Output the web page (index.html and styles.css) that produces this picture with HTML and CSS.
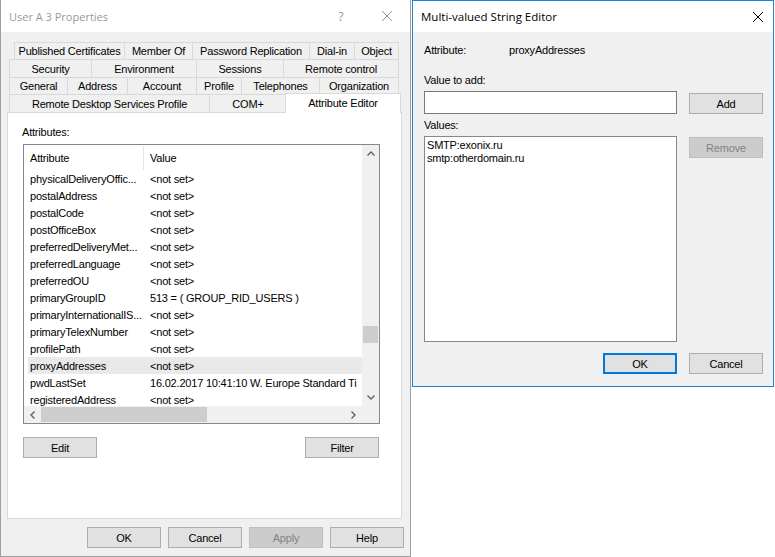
FILE: index.html
```html
<!DOCTYPE html>
<html lang="en">

<head>
    <meta charset="UTF-8">
    <title>User A 3 Properties</title>
    <link rel="stylesheet" href="styles.css">
</head>

<body>
    <div class="desktop">

        <!-- properties window (inactive, behind) -->
        <div class="window props">
            <div class="titlebar">
                <span class="title">User A 3 Properties</span>
                <span class="caption help">?</span>
                <span class="caption close">
                    <svg width="10" height="10" viewBox="0 0 10 10"><path d="M0 0L10 10M10 0L0 10" stroke="#999" stroke-width="1"/></svg>
                </span>
            </div>
            <div class="props-body">
                <div class="tabs">
                    <div class="tab-row row1">
                        <div class="tab">Published Certificates</div>
                        <div class="tab">Member Of</div>
                        <div class="tab">Password Replication</div>
                        <div class="tab">Dial-in</div>
                        <div class="tab">Object</div>
                    </div>
                    <div class="tab-row row2">
                        <div class="tab">Security</div>
                        <div class="tab">Environment</div>
                        <div class="tab">Sessions</div>
                        <div class="tab">Remote control</div>
                    </div>
                    <div class="tab-row row3">
                        <div class="tab">General</div>
                        <div class="tab">Address</div>
                        <div class="tab">Account</div>
                        <div class="tab">Profile</div>
                        <div class="tab">Telephones</div>
                        <div class="tab">Organization</div>
                    </div>
                    <div class="tab-row row4">
                        <div class="tab">Remote Desktop Services Profile</div>
                        <div class="tab">COM+</div>
                        <div class="tab active">Attribute Editor</div>
                    </div>
                </div>

                <div class="panel">
                    <div class="label">Attributes:</div>
                    <div class="listview">
                        <div class="lv-main">
                            <div class="lv-header">
                                <div class="hcol hcol-attr">Attribute</div>
                                <div class="hcol">Value</div>
                            </div>
                            <div class="lv-row"><span>physicalDeliveryOffic...</span><span>&lt;not set&gt;</span></div>
                            <div class="lv-row"><span>postalAddress</span><span>&lt;not set&gt;</span></div>
                            <div class="lv-row"><span>postalCode</span><span>&lt;not set&gt;</span></div>
                            <div class="lv-row"><span>postOfficeBox</span><span>&lt;not set&gt;</span></div>
                            <div class="lv-row"><span>preferredDeliveryMet...</span><span>&lt;not set&gt;</span></div>
                            <div class="lv-row"><span>preferredLanguage</span><span>&lt;not set&gt;</span></div>
                            <div class="lv-row"><span>preferredOU</span><span>&lt;not set&gt;</span></div>
                            <div class="lv-row"><span>primaryGroupID</span><span>513 = ( GROUP_RID_USERS )</span></div>
                            <div class="lv-row"><span>primaryInternationalIS...</span><span>&lt;not set&gt;</span></div>
                            <div class="lv-row"><span>primaryTelexNumber</span><span>&lt;not set&gt;</span></div>
                            <div class="lv-row"><span>profilePath</span><span>&lt;not set&gt;</span></div>
                            <div class="lv-row selected"><span>proxyAddresses</span><span>&lt;not set&gt;</span></div>
                            <div class="lv-row"><span>pwdLastSet</span><span>16.02.2017 10:41:10 W. Europe Standard Ti</span></div>
                            <div class="lv-row"><span>registeredAddress</span><span>&lt;not set&gt;</span></div>
                        </div>
                        <div class="vscroll">
                            <div class="sb-btn">
                                <svg width="8" height="5" viewBox="0 0 8 5"><path d="M0.5 4.5L4 1L7.5 4.5" fill="none" stroke="#606060" stroke-width="1.4"/></svg>
                            </div>
                            <div class="vtrack"><div class="vthumb"></div></div>
                            <div class="sb-btn">
                                <svg width="8" height="5" viewBox="0 0 8 5"><path d="M0.5 0.5L4 4L7.5 0.5" fill="none" stroke="#606060" stroke-width="1.4"/></svg>
                            </div>
                        </div>
                        <div class="hscroll">
                            <div class="sb-btn">
                                <svg width="5" height="8" viewBox="0 0 5 8"><path d="M4.5 0.5L1 4L4.5 7.5" fill="none" stroke="#606060" stroke-width="1.4"/></svg>
                            </div>
                            <div class="htrack"><div class="hthumb"></div></div>
                            <div class="sb-btn">
                                <svg width="5" height="8" viewBox="0 0 5 8"><path d="M0.5 0.5L4 4L0.5 7.5" fill="none" stroke="#606060" stroke-width="1.4"/></svg>
                            </div>
                        </div>
                        <div class="sb-corner"></div>
                    </div>
                    <div class="panel-buttons">
                        <button class="btn">Edit</button>
                        <button class="btn">Filter</button>
                    </div>
                </div>

                <div class="dialog-buttons">
                    <button class="btn">OK</button>
                    <button class="btn">Cancel</button>
                    <button class="btn" disabled>Apply</button>
                    <button class="btn">Help</button>
                </div>
            </div>
        </div>

        <!-- multi-valued string editor (active) -->
        <div class="window editor">
            <div class="titlebar">
                <span class="title">Multi-valued String Editor</span>
                <span class="caption close small">
                    <svg width="10" height="10" viewBox="0 0 10 10"><path d="M0 0L10 10M10 0L0 10" stroke="#000" stroke-width="1"/></svg>
                </span>
            </div>
            <div class="ed-body">
                <div class="attr-line">
                    <span>Attribute:</span>
                    <span>proxyAddresses</span>
                </div>
                <div class="label value-label">Value to add:</div>
                <div class="input-line">
                    <div class="textbox"></div>
                    <button class="btn">Add</button>
                </div>
                <div class="label values-label">Values:</div>
                <div class="values-line">
                    <div class="valuebox">
                        <div>SMTP:exonix.ru</div>
                        <div>smtp:otherdomain.ru</div>
                    </div>
                    <button class="btn remove" disabled>Remove</button>
                </div>
                <div class="ed-buttons">
                    <button class="btn default">OK</button>
                    <button class="btn">Cancel</button>
                </div>
            </div>
        </div>

    </div>
</body>

</html>
```

FILE: styles.css
```css
* {
    box-sizing: border-box;
}

body {
    margin: 0;
    background: #fff;
    font-family: "Liberation Sans", Arial, sans-serif;
    font-size: 11px;
    letter-spacing: -0.2px;
    color: #000;
}

.desktop {
    position: relative;
    width: 775px;
    height: 557px;
    overflow: hidden;
}

/* windows sit on the desktop at their own spots */
.window {
    position: absolute;
    top: 0;
    display: flex;
    flex-direction: column;
    background: #f0f0f0;
}

.props {
    left: 0;
    width: 411px;
    height: 557px;
    border: 1px solid #a0a0a0;
    border-top: none;
}

.editor {
    left: 412px;
    width: 362px;
    height: 387px;
    border: 1px solid #1883d7;
}

.titlebar {
    height: 32px;
    flex: none;
    display: flex;
    align-items: center;
    background: #fff;
    padding-left: 8px;
    font-family: "Open Sans", sans-serif;
    font-size: 11px;
    letter-spacing: 0;
}

.editor .titlebar {
    height: 31px;
    font-size: 11.5px;
}

.props .title {
    color: #999;
    padding-top: 1px;
}

.title {
    flex: 1;
}

.caption {
    width: 46px;
    height: 100%;
    display: flex;
    align-items: center;
    justify-content: center;
}

.caption.help {
    color: #999;
    font-size: 12.5px;
}

.caption.small {
    width: 30px;
    padding-top: 1px;
}

/* ---- tabs ---- */
.props-body {
    padding: 10px 0 0 6px;
}

.tabs {
    margin-left: 2px;
    width: 390px;
}

.tab-row {
    display: grid;
}

.row1 {
    grid-template-columns: 111px 68px 117px 45px 44px;
    margin-left: 5px;
    height: 17px;
}

.row2 {
    grid-template-columns: 83px 105px 87px 115px;
    height: 18px;
}

.row3 {
    grid-template-columns: 59px 60px 69px 45px 78px 79px;
    height: 17px;
}

.row4 {
    grid-template-columns: 201px 77px 112px;
    height: 18px;
}

.tab {
    display: flex;
    align-items: center;
    justify-content: center;
    white-space: nowrap;
    border-top: 1px solid #d9d9d9;
    border-right: 1px solid #d9d9d9;
    background: #f0f0f0;
}

.tab:first-child {
    border-left: 1px solid #d9d9d9;
}

.tab.active {
    position: relative;
    margin: -1px -2px -1px -2px;
    border-left: 1px solid #d9d9d9;
    background: #fff;
    padding-bottom: 2px;
}

.panel {
    width: 395px;
    height: 407px;
    background: #fff;
    border: 1px solid #d9d9d9;
    padding: 13px 0 0 14px;
}

.label {
    line-height: 13px;
}

/* ---- attribute list ---- */
.listview {
    margin: 5px 0 0 1px;
    width: 357px;
    height: 280px;
    border: 1px solid #828790;
    display: grid;
    grid-template-columns: 1fr 17px;
    grid-template-rows: 1fr 17px;
}

.lv-main {
    overflow: hidden;
    background: #fff;
}

.lv-header {
    display: flex;
    height: 25px;
}

.hcol {
    display: flex;
    align-items: center;
    padding-left: 6px;
}

.hcol-attr {
    width: 120px;
    border-right: 1px solid #e5e5e5;
    margin-top: 1px;
}

.lv-row {
    display: grid;
    grid-template-columns: 114px 1fr;
    height: 17px;
    line-height: 18px;
    margin-left: 4px;
    padding-left: 2px;
    white-space: nowrap;
    overflow: hidden;
}

.lv-row span:last-child {
    padding-left: 6px;
}

.lv-row.selected {
    background: #e9e9e9;
}

.vscroll,
.hscroll,
.sb-corner {
    background: #f0f0f0;
}

.vscroll {
    display: flex;
    flex-direction: column;
}

.hscroll {
    display: flex;
}

.sb-btn {
    width: 17px;
    height: 17px;
    flex: none;
    display: flex;
    align-items: center;
    justify-content: center;
}

.vtrack {
    flex: 1;
    padding: 164px 1px 0;
}

.vthumb {
    height: 17px;
    background: #cdcdcd;
}

.htrack {
    flex: 1;
    padding: 1px 0;
}

.hthumb {
    width: 166px;
    height: 15px;
    background: #cdcdcd;
}

/* ---- buttons ---- */
.btn {
    width: 74px;
    height: 21px;
    padding: 0;
    font: inherit;
    letter-spacing: inherit;
    color: #000;
    background: #e1e1e1;
    border: 1px solid #adadad;
}

.btn:disabled {
    background: #cccccc;
    border-color: #bfbfbf;
    color: #838383;
}

.btn.default {
    border: 2px solid #0078d7;
}

.panel-buttons {
    display: flex;
    justify-content: space-between;
    width: 356px;
    margin: 13px 0 0 1px;
}

.dialog-buttons {
    display: flex;
    justify-content: flex-end;
    gap: 7px;
    margin-top: 8px;
    padding-right: 6px;
}

/* ---- string editor ---- */
.ed-body {
    padding: 12px 10px 0 11px;
}

.attr-line {
    display: grid;
    grid-template-columns: 85px 1fr;
    line-height: 13px;
}

.value-label {
    margin-top: 17px;
}

.input-line,
.values-line {
    display: flex;
    justify-content: space-between;
}

.input-line {
    align-items: flex-end;
    margin-top: 4px;
}

.textbox {
    width: 253px;
    height: 23px;
    background: #fff;
    border: 1px solid #7a7a7a;
}

.values-label {
    margin-top: 5px;
}

.values-line {
    align-items: flex-start;
    margin-top: 4px;
}

.valuebox {
    width: 253px;
    height: 206px;
    background: #fff;
    border: 1px solid #828790;
    padding: 2px 2px;
    line-height: 13px;
}

.remove {
    margin-top: 1px;
}

.ed-buttons {
    display: flex;
    justify-content: flex-end;
    gap: 12px;
    margin-top: 11px;
}
```
